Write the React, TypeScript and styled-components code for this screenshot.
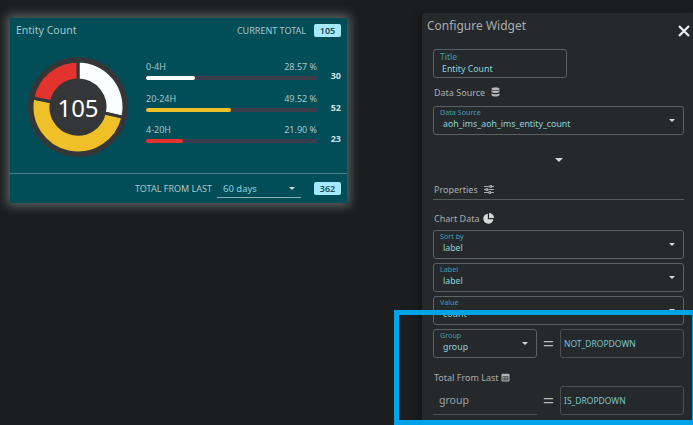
import React from "react";
import styled, { createGlobalStyle } from "styled-components";

const GlobalStyle = createGlobalStyle`
  html, body {
    margin: 0;
    height: 425px;
    overflow: hidden;
    background: #1b1d1e;
    font-family: "Noto Sans", "Open Sans", sans-serif;
  }
`;

const Page = styled.div`
  position: relative;
  width: 693px;
  height: 425px;
  overflow: hidden;
  display: flex;
  align-items: flex-start;
  justify-content: space-between;
  padding: 13px 0 0 10px;
  box-sizing: border-box;
`;

const Card = styled.div`
  width: 337px;
  height: 185px;
  margin-top: 5px;
  background: #014d58;
  box-shadow: 0 0 10px 3px rgba(170, 190, 190, 0.45);
  display: flex;
  flex-direction: column;
  color: #aac6ca;
`;

const CardHeader = styled.div`
  height: 24px;
  padding: 0 6px;
  display: flex;
  align-items: center;
  justify-content: space-between;
`;

const CardTitle = styled.span`
  font-size: 10.5px;
`;

const TotalGroup = styled.div`
  display: flex;
  align-items: center;
  gap: 8px;
  font-size: 9px;
`;

const Badge = styled.span`
  width: 27px;
  height: 13px;
  border-radius: 2px;
  background: #a5eafa;
  color: #1c4c58;
  font-size: 9px;
  font-weight: 600;
  display: flex;
  align-items: center;
  justify-content: center;
`;

const CardBody = styled.div`
  flex: 1;
  display: flex;
  align-items: flex-start;
  padding: 15px 6px 0 18px;
`;

const Donut = styled.div`
  position: relative;
  width: 100px;
  height: 100px;
  margin-right: 18px;
  flex-shrink: 0;
`;

const DonutValue = styled.span`
  position: absolute;
  inset: 0;
  display: flex;
  align-items: center;
  justify-content: center;
  color: #fff;
  font-size: 24px;
`;

const Stats = styled.div`
  flex: 1;
  display: flex;
  flex-direction: column;
  gap: 8.5px;
`;

const StatRow = styled.div`
  display: grid;
  grid-template-columns: 171px 1fr;
  align-items: end;
  height: 23px;
`;

const StatMain = styled.div`
  display: flex;
  flex-direction: column;
  gap: 3px;
`;

const StatLabels = styled.div`
  display: flex;
  justify-content: space-between;
  font-size: 9px;
  line-height: 12px;
`;

const Track = styled.div`
  height: 4px;
  border-radius: 1px;
  background: #3b3d4c;
  overflow: hidden;
`;

const Fill = styled.div<{ $color: string }>`
  height: 100%;
  border-radius: 2px;
  background: ${(p) => p.$color};
`;

const StatCount = styled.span`
  font-size: 9px;
  font-weight: 700;
  line-height: 12px;
  color: #d0dfe1;
  text-align: right;
  margin-bottom: -2px;
`;

const CardFooter = styled.div`
  height: 30px;
  border-top: 1px solid #47808a;
  box-sizing: border-box;
  padding: 0 6px;
  display: flex;
  align-items: center;
  justify-content: flex-end;
  font-size: 9px;
`;

const FooterSelect = styled.div`
  width: 84px;
  height: 18px;
  box-sizing: border-box;
  margin: 0 13px 0 5px;
  padding: 0 6px;
  border-bottom: 1px solid #86aeb4;
  display: flex;
  align-items: center;
  justify-content: space-between;
  color: #8cd0da;
  font-size: 9.5px;
`;

const Caret = styled.span<{ $size?: number }>`
  width: 0;
  height: 0;
  flex-shrink: 0;
  border-left: ${(p) => p.$size ?? 3}px solid transparent;
  border-right: ${(p) => p.$size ?? 3}px solid transparent;
  border-top: ${(p) => p.$size ?? 3}px solid #d4d8d9;
`;

const Panel = styled.div`
  width: 271px;
  height: 430px;
  flex-shrink: 0;
  box-sizing: border-box;
  border-radius: 3px 0 0 0;
  background: #25292b;
  box-shadow: -4px 0 6px rgba(0, 0, 0, 0.25);
  padding: 5px 9px 0 11px;
  color: #a8adae;
`;

const PanelHeader = styled.div`
  position: relative;
  height: 31px;
  margin-left: -6px;
  font-size: 12px;
  line-height: 16px;
`;

const CloseIcon = styled.svg`
  position: absolute;
  right: -6px;
  top: 7px;
`;

const Field = styled.div<{ $width?: number; $gap?: number }>`
  height: 29px;
  width: ${(p) => (p.$width ? `${p.$width}px` : "auto")};
  margin-bottom: ${(p) => p.$gap ?? 0}px;
  flex-shrink: 0;
  box-sizing: border-box;
  border: 1px solid #5c6163;
  border-radius: 3px;
  padding: 0 9px;
  position: relative;
  overflow: hidden;
`;

const FieldLabel = styled.div`
  font-size: 7.2px;
  line-height: 9px;
  margin-top: 1px;
  margin-left: -3px;
  color: #3f9fb0;
`;

const FieldValue = styled.div`
  font-size: 8.8px;
  line-height: 15px;
  color: #8fd2dc;
`;

const TitleLabel = styled(FieldLabel)`
  font-size: 8.5px;
  line-height: 11px;
`;

const TitleValue = styled(FieldValue)`
  margin-left: -1px;
`;

const FieldCaret = styled(Caret)`
  position: absolute;
  right: 8px;
  top: 12px;
`;

const Heading = styled.div<{ $height: number; $gap?: number }>`
  height: ${(p) => p.$height}px;
  padding-left: 1px;
  display: flex;
  align-items: center;
  gap: ${(p) => p.$gap ?? 6}px;
  font-size: 9px;
`;

const CenterCaret = styled.div`
  height: 50px;
  display: flex;
  align-items: center;
  justify-content: center;
`;

const Divider = styled.div`
  height: 1px;
  margin: 5px 0 8px;
  background: #565b5d;
`;

const ChartFields = styled.div`
  margin-top: 2px;
`;

const Pair = styled.div`
  display: flex;
  align-items: center;
`;

const EqualsSign = styled.span`
  width: 23px;
  text-align: center;
  font-size: 20px;
  line-height: 20px;
  color: #b8bcbd;
`;

const TextBox = styled.div`
  flex: 1;
  height: 29px;
  box-sizing: border-box;
  border: 1px solid #4a4f51;
  border-radius: 3px;
  padding: 0 3px;
  display: flex;
  align-items: center;
  font-size: 8.5px;
  color: #7fc3cf;
`;

const PlainField = styled.div`
  width: 104px;
  height: 29px;
  box-sizing: border-box;
  border-bottom: 1px solid #4a4f51;
  padding-left: 6px;
  display: flex;
  align-items: center;
  font-size: 10.5px;
  color: #9aa0a1;
`;

const TotalHeading = styled(Heading)`
  padding-top: 10px;
  box-sizing: border-box;
`;

const Highlight = styled.div`
  position: absolute;
  left: 394px;
  top: 310px;
  width: 299px;
  height: 115px;
  box-sizing: border-box;
  border: 5px solid #00a3e8;
  border-right-width: 1px;
  pointer-events: none;
`;

const polar = (r: number, deg: number) => {
  const a = ((deg - 90) * Math.PI) / 180;
  return `${(50 + r * Math.cos(a)).toFixed(2)} ${(50 + r * Math.sin(a)).toFixed(2)}`;
};

const sector = (from: number, to: number) => {
  const large = to - from > 180 ? 1 : 0;
  return `M${polar(46, from)} A46 46 0 ${large} 1 ${polar(46, to)} L${polar(27, to)} A27 27 0 ${large} 0 ${polar(27, from)} Z`;
};

const slices = [
  { from: 0, to: 102.9, color: "#fbfcff" },
  { from: 102.9, to: 281.2, color: "#f0c029" },
  { from: 281.2, to: 360, color: "#e2332c" },
];

const stats = [
  { label: "0-4H", pct: "28.57 %", width: 28.57, color: "#ffffff", count: 30 },
  { label: "20-24H", pct: "49.52 %", width: 49.52, color: "#f0c029", count: 52 },
  { label: "4-20H", pct: "21.90 %", width: 21.9, color: "#e2332c", count: 23 },
];

const DatabaseIcon = () => (
  <svg width="9" height="10" viewBox="0 0 9 10" fill="#b4b8b9">
    <ellipse cx="4.5" cy="1.8" rx="4" ry="1.6" />
    <path d="M.5 3v1.4c0 .9 1.8 1.5 4 1.5s4-.6 4-1.5V3c-.8.7-2.3 1-4 1S1.3 3.7.5 3z" />
    <path d="M.5 6.2v1.9c0 .9 1.8 1.5 4 1.5s4-.6 4-1.5V6.2c-.8.7-2.3 1-4 1s-3.2-.3-4-1z" />
  </svg>
);

const SlidersIcon = () => (
  <svg width="10" height="9" viewBox="0 0 10 9" fill="none" stroke="#b4b8b9" strokeWidth="0.9">
    <path d="M0 1.5h10M0 4.5h10M0 7.5h10" />
    <rect x="6" y=".6" width="1.6" height="1.8" fill="#25292b" />
    <rect x="2" y="3.6" width="1.6" height="1.8" fill="#25292b" />
    <rect x="5" y="6.6" width="1.6" height="1.8" fill="#25292b" />
  </svg>
);

const PieIcon = () => (
  <svg width="11" height="11" viewBox="0 0 10 10" fill="#d6d9da">
    <path d="M4.4.6v5h5A4.6 4.6 0 1 1 4.4.6z" />
    <path d="M5.5 0A4.5 4.5 0 0 1 10 4.5H5.5z" />
  </svg>
);

const CalendarIcon = () => (
  <svg width="9" height="9" viewBox="0 0 9 9">
    <rect x=".5" y=".8" width="8" height="7.7" rx="1" fill="#b4b8b9" />
    <rect x="1.5" y="3.2" width="6" height="4.3" fill="#4a4e50" />
    <path d="M2 4.5h5M2 6h5" stroke="#b4b8b9" strokeWidth=".7" strokeDasharray="1 .5" />
  </svg>
);

const App = () => {
  return (
    <Page>
      <GlobalStyle />
      <Card>
        <CardHeader>
          <CardTitle>Entity Count</CardTitle>
          <TotalGroup>
            CURRENT TOTAL
            <Badge>105</Badge>
          </TotalGroup>
        </CardHeader>
        <CardBody>
          <Donut>
            <svg width="100" height="100" viewBox="0 0 100 100">
              <circle cx="50" cy="50" r="50" fill="#343638" />
              {slices.map((s) => (
                <path key={s.color} d={sector(s.from, s.to)} fill={s.color} stroke="#343638" strokeWidth="3" />
              ))}
            </svg>
            <DonutValue>105</DonutValue>
          </Donut>
          <Stats>
            {stats.map((s) => (
              <StatRow key={s.label}>
                <StatMain>
                  <StatLabels>
                    <span>{s.label}</span>
                    <span>{s.pct}</span>
                  </StatLabels>
                  <Track>
                    <Fill $color={s.color} style={{ width: `${s.width}%` }} />
                  </Track>
                </StatMain>
                <StatCount>{s.count}</StatCount>
              </StatRow>
            ))}
          </Stats>
        </CardBody>
        <CardFooter>
          TOTAL FROM LAST
          <FooterSelect>
            60 days
            <Caret />
          </FooterSelect>
          <Badge>362</Badge>
        </CardFooter>
      </Card>

      <Panel>
        <PanelHeader>
          Configure Widget
          <CloseIcon width="12" height="12" viewBox="0 0 12 12" stroke="#eceeee" strokeWidth="2.2">
            <path d="M1 1l10 10M11 1L1 11" />
          </CloseIcon>
        </PanelHeader>
        <Field $width={134}>
          <TitleLabel>Title</TitleLabel>
          <TitleValue>Entity Count</TitleValue>
        </Field>
        <Heading $height={28}>
          Data Source <DatabaseIcon />
        </Heading>
        <Field>
          <FieldLabel>Data Source</FieldLabel>
          <FieldValue>aoh_ims_aoh_ims_entity_count</FieldValue>
          <FieldCaret />
        </Field>
        <CenterCaret>
          <Caret $size={4} />
        </CenterCaret>
        <Heading $height={9}>
          Properties <SlidersIcon />
        </Heading>
        <Divider />
        <Heading $height={20} $gap={3}>
          Chart Data <PieIcon />
        </Heading>
        <ChartFields>
          <Field $gap={4}>
            <FieldLabel>Sort by</FieldLabel>
            <FieldValue>label</FieldValue>
            <FieldCaret />
          </Field>
          <Field $gap={4}>
            <FieldLabel>Label</FieldLabel>
            <FieldValue>label</FieldValue>
            <FieldCaret />
          </Field>
          <Field $gap={4}>
            <FieldLabel>Value</FieldLabel>
            <FieldValue>count</FieldValue>
            <FieldCaret />
          </Field>
        </ChartFields>
        <Pair>
          <Field $width={104}>
            <FieldLabel>Group</FieldLabel>
            <FieldValue>group</FieldValue>
            <FieldCaret />
          </Field>
          <EqualsSign>=</EqualsSign>
          <TextBox>NOT_DROPDOWN</TextBox>
        </Pair>
        <TotalHeading $height={28} $gap={2}>
          Total From Last <CalendarIcon />
        </TotalHeading>
        <Pair>
          <PlainField>group</PlainField>
          <EqualsSign>=</EqualsSign>
          <TextBox>IS_DROPDOWN</TextBox>
        </Pair>
      </Panel>
      <Highlight />
    </Page>
  );
};

export default App;
